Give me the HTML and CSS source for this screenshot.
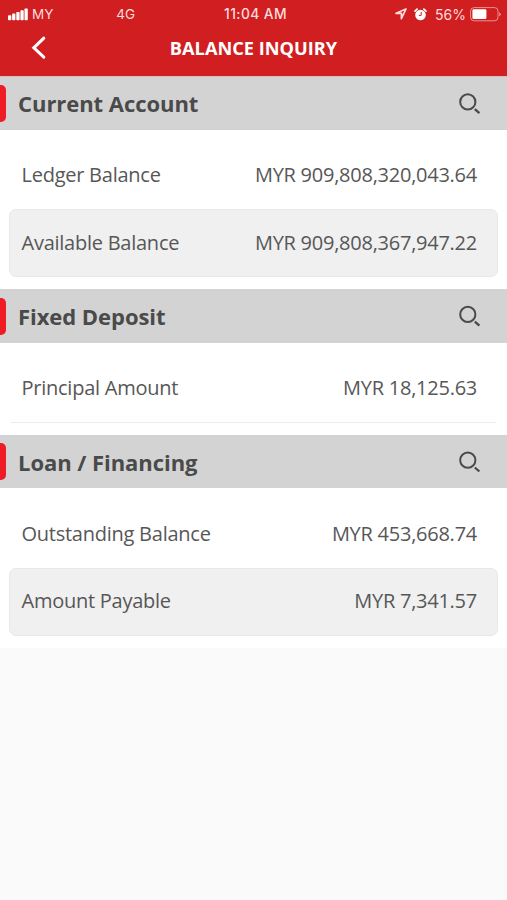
FILE: index.html
```html
<!DOCTYPE html>
<html lang="en">
<head>
<meta charset="utf-8">
<title>Balance Inquiry</title>
<link rel="stylesheet" href="styles.css">
</head>
<body>
<header class="header">
  <div class="status">
    <div class="status-left">
      <svg class="signal" width="20" height="13" viewBox="0 0 20 13" fill="currentColor"><rect x="0" y="7.3" width="3.3" height="5" rx=".8"/><rect x="4.1" y="5.6" width="3.3" height="6.7" rx=".8"/><rect x="8.3" y="4" width="3.3" height="8.3" rx=".8"/><rect x="12.4" y="2.2" width="3.3" height="10.1" rx=".8"/><rect x="16.5" y=".5" width="3.3" height="11.8" rx=".8"/></svg>
      <span class="carrier">MY</span>
      <span class="network">4G</span>
    </div>
    <span class="time">11:04 AM</span>
    <div class="status-right">
      <svg width="12" height="12" viewBox="0 0 12 12" fill="none" stroke="currentColor" stroke-width="1.7" stroke-linejoin="round"><path d="M11 1 1.1 5.3H6.4V10.7Z"/></svg>
      <svg class="alarm" width="13" height="13" viewBox="0 0 13 13"><circle cx="6.5" cy="7" r="5.3" fill="currentColor"/><path d="M1 3.2 3.1 1.2M12 3.2 9.9 1.2" stroke="currentColor" stroke-width="1.7" stroke-linecap="round"/><path class="hands" d="M7.2 4v3.4H4.8" fill="none" stroke-width="1"/></svg>
      <span class="percent">56%</span>
      <svg width="31" height="15" viewBox="0 0 31 15"><rect x=".6" y=".6" width="27.4" height="13.2" rx="3.5" fill="none" stroke="currentColor" stroke-opacity=".6"/><rect x="2.4" y="2.3" width="14" height="9.8" rx="1.3" fill="#fff"/><path d="M29.2 5.2q1.6.5 1.6 2t-1.6 2Z" fill="currentColor" fill-opacity=".6"/></svg>
    </div>
  </div>
  <div class="nav">
    <svg class="back" width="16" height="24" viewBox="0 0 16 24" fill="none" stroke="currentColor" stroke-width="3" stroke-linecap="round"><path d="M12.8 2.2 2.8 11.8l10 9.4"/></svg>
    <h1 class="title">BALANCE INQUIRY</h1>
  </div>
</header>
<main>
  <section class="section first">
    <div class="head"><i class="marker"></i><h2>Current Account</h2>
      <svg class="search" width="24" height="24" viewBox="0 0 24 24" fill="none" stroke="currentColor" stroke-width="2"><circle cx="9.8" cy="9.9" r="7.6"/><path d="m16.8 17.2 4.6 4" stroke-width="2.3"/></svg></div>
    <div class="body">
      <div class="row"><span class="label">Ledger Balance</span><span class="amount">MYR 909,808,320,043.64</span></div>
      <div class="row boxed"><span class="label">Available Balance</span><span class="amount">MYR 909,808,367,947.22</span></div>
    </div>
  </section>
  <section class="section">
    <div class="head"><i class="marker"></i><h2>Fixed Deposit</h2>
      <svg class="search" width="24" height="24" viewBox="0 0 24 24" fill="none" stroke="currentColor" stroke-width="2"><circle cx="9.8" cy="10.4" r="7.6"/><path d="m16.8 17.7 4.6 4" stroke-width="2.3"/></svg></div>
    <div class="body">
      <div class="row ruled"><span class="label">Principal Amount</span><span class="amount">MYR 18,125.63</span></div>
    </div>
  </section>
  <section class="section last">
    <div class="head"><i class="marker"></i><h2>Loan / Financing</h2>
      <svg class="search" width="24" height="24" viewBox="0 0 24 24" fill="none" stroke="currentColor" stroke-width="2"><circle cx="9.8" cy="10.2" r="7.6"/><path d="m16.8 17.5 4.6 4" stroke-width="2.3"/></svg></div>
    <div class="body">
      <div class="row"><span class="label">Outstanding Balance</span><span class="amount">MYR 453,668.74</span></div>
      <div class="row boxed"><span class="label">Amount Payable</span><span class="amount">MYR 7,341.57</span></div>
    </div>
  </section>
</main>
</body>
</html>
```
FILE: styles.css
```css
* { box-sizing: border-box; }
body {
  margin: 0;
  min-height: 900px;
  background: #fafafa;
  color: #575757;
  font-family: "Open Sans", "Noto Sans", sans-serif;
}
.header {
  height: 77px;
  background: #d01e21;
  border-bottom: 1px solid #dfb9b6;
  color: #fff;
}
.status {
  display: grid;
  grid-template-columns: 1fr auto 1fr;
  align-items: center;
  height: 27px;
  padding: 0 6px 0 8px;
  color: #ffdcd9;
  font: 14px/27px Inter, "Liberation Sans", sans-serif;
}
.status-left, .status-right { display: flex; align-items: center; }
.status-right { justify-content: flex-end; }
.signal { margin-right: 4px; color: #fff; }
.network { margin-left: 63px; }
.carrier, .network { font-size: 13.5px; }
.percent { margin-right: 4px; font-size: 14px; }
.time { padding: 1px 0 0 2px; font-size: 13.8px; font-weight: 500; letter-spacing: .4px; }
.alarm { margin: 0 8px 0 7px; color: #fff; }
.hands { stroke: #d01e21; }
.nav {
  display: grid;
  grid-template-columns: 48px 1fr 48px;
  align-items: center;
  height: 42px;
}
.back { margin-left: 31px; }
.title {
  margin: 0;
  text-align: center;
  font-size: 18.2px;
  font-weight: 700;
  line-height: 42px;
}
.head {
  display: flex;
  align-items: center;
  height: 54px;
  padding-right: 25px;
  background: #d3d3d3;
  color: #4a4a4a;
}
.marker {
  width: 6px;
  height: 37px;
  border-radius: 0 5px 5px 0;
  background: #ee1c24;
}
h2 {
  flex: 1;
  margin: 0 0 0 12px;
  font-size: 22px;
  font-weight: 700;
  line-height: 30px;
  letter-spacing: -.05px;
}
.body { padding: 12px 9px; background: #fff; }
.first .head, .last .head { height: 53px; }
.first h2 { padding-bottom: 2px; }
.first .body { padding-top: 11px; }
.row {
  display: flex;
  justify-content: space-between;
  align-items: center;
  height: 68px;
  padding: 0 21px 0 12.5px;
  font-size: 20px;
  line-height: 28px;
  letter-spacing: -.25px;
}
.boxed {
  border: 1px solid #e8e8e8;
  border-radius: 7px;
  padding: 0 20px 0 11.5px;
  background: #f0f0f0;
}
.last .boxed { padding-bottom: 2px; }
.ruled {
  margin: 0 2px;
  padding: 0 19px 2px 10.5px;
  border-bottom: 1px solid #ececec;
}
```
